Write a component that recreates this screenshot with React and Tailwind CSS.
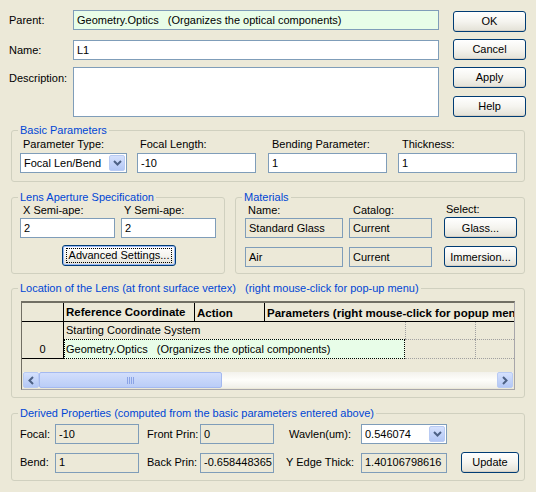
import React from 'react';

const Chevron = () => (
  <svg width="9" height="6" viewBox="0 0 9 6">
    <path d="M1 1l3.5 3.5L8 1" stroke="#4D6185" strokeWidth="2" fill="none" />
  </svg>
);

const Group = ({ title, className = '', children }) => (
  <fieldset className={`border border-[#D0D0BF] rounded-[3px] ${className}`}>
    <legend className="ml-[6px] px-[2px] leading-[12px] text-[#0046D5] whitespace-pre">{title}</legend>
    {children}
  </fieldset>
);

const Field = ({ value, className = '', bg = 'bg-white' }) => (
  <div className={`h-[20px] border border-[#7F9DB9] px-[3px] flex items-center whitespace-pre overflow-hidden ${bg} ${className}`}>
    {value}
  </div>
);

const Btn = ({ children, className = '', focus = false }) => (
  <button
    className={`h-[21px] border border-[#003C74] rounded-[3px] bg-linear-to-b from-white via-[#F5F4EF] to-[#E3E1D6] flex items-center justify-center shadow-[inset_0_-1px_0_#D6D0C5] ${className}`}
  >
    {focus ? <span className="border border-dotted border-black px-[2px] leading-[13px]">{children}</span> : children}
  </button>
);

const Combo = ({ value, className = '' }) => (
  <div className={`h-[20px] border border-[#7F9DB9] bg-white flex items-center pl-[3px] pr-[1px] ${className}`}>
    <span className="flex-1 whitespace-nowrap overflow-hidden">{value}</span>
    <div className="w-[16px] h-[16px] rounded-[2px] border border-[#B9CBF3] bg-linear-to-b from-[#D5E1FD] to-[#B3C7F5] flex items-center justify-center">
      <Chevron />
    </div>
  </div>
);

export default function App() {
  return (
    <div className="w-[536px] h-[492px] bg-[#ECE9D8] overflow-hidden text-[11px] text-black font-['Liberation_Sans',Arial,sans-serif]">
      {/* top section */}
      <div className="flex pt-[10px] pl-[9px]">
        <div className="w-[430px] flex flex-col">
          <div className="flex items-center">
            <span className="w-[64px]">Parent:</span>
            <Field value="Geometry.Optics   (Organizes the optical components)" bg="bg-[#E8FDE8]" className="w-[366px]" />
          </div>
          <div className="flex items-center mt-[10px]">
            <span className="w-[64px]">Name:</span>
            <Field value="L1" className="w-[366px]" />
          </div>
          <div className="flex items-start mt-[7px]">
            <span className="w-[64px] pt-[3px]">Description:</span>
            <div className="w-[366px] h-[50px] border border-[#7F9DB9] bg-white" />
          </div>
        </div>
        <div className="ml-[14px] pt-[1px] flex flex-col gap-[7px]">
          <Btn className="w-[73px]">OK</Btn>
          <Btn className="w-[73px]">Cancel</Btn>
          <Btn className="w-[73px]">Apply</Btn>
          <Btn className="w-[73px] mt-[1px]">Help</Btn>
        </div>
      </div>

      {/* basic parameters */}
      <Group title="Basic Parameters" className="mx-[11px] mt-[7px]">
        <div className="flex pl-[8px] pt-[2px] pb-[8px] leading-[12px]">
          <div className="w-[107px] flex flex-col">
            <span className="pl-[3px]">Parameter Type:</span>
            <Combo value="Focal Len/Bend" className="mt-[3px]" />
          </div>
          <div className="w-[119px] ml-[10px] flex flex-col">
            <span className="pl-[3px]">Focal Length:</span>
            <Field value="-10" className="mt-[3px]" />
          </div>
          <div className="w-[119px] ml-[12px] flex flex-col">
            <span className="pl-[4px]">Bending Parameter:</span>
            <Field value="1" className="mt-[3px]" />
          </div>
          <div className="w-[119px] ml-[11px] flex flex-col">
            <span className="pl-[4px]">Thickness:</span>
            <Field value="1" className="mt-[3px]" />
          </div>
        </div>
      </Group>

      {/* aperture + materials */}
      <div className="flex mx-[11px] mt-[9px] gap-[10px]">
        <Group title="Lens Aperture Specification" className="w-[214px]">
          <div className="pl-[8px] pt-[1px] pb-[6px] leading-[12px]">
            <div className="flex gap-[6px]">
              <div className="w-[95px] flex flex-col">
                <span className="pl-[3px]">X Semi-ape:</span>
                <Field value="2" className="mt-[2px]" />
              </div>
              <div className="w-[95px] flex flex-col">
                <span className="pl-[3px]">Y Semi-ape:</span>
                <Field value="2" className="mt-[2px]" />
              </div>
            </div>
            <Btn focus className="w-[114px] ml-[42px] mt-[7px] border-[#001F6E] shadow-[inset_0_0_0_1px_#98B8F8]">
              Advanced Settings...
            </Btn>
          </div>
        </Group>
        <Group title="Materials" className="flex-1">
          <div className="pl-[9px] pt-[1px] pb-[6px] leading-[12px]">
            <div className="flex">
              <span className="w-[104px] pl-[3px]">Name:</span>
              <span className="w-[94px] pl-[4px]">Catalog:</span>
              <span className="pl-[3px] -mt-[1px]">Select:</span>
            </div>
            <div className="flex items-center mt-[2px]">
              <Field value="Standard Glass" bg="bg-[#ECE9D8]" className="w-[98px]" />
              <Field value="Current" bg="bg-[#ECE9D8]" className="w-[83px] ml-[6px]" />
              <Btn className="w-[73px] ml-[12px] -mt-[1px]">Glass...</Btn>
            </div>
            <div className="flex items-center mt-[8px]">
              <Field value="Air" bg="bg-[#ECE9D8]" className="w-[98px]" />
              <Field value="Current" bg="bg-[#ECE9D8]" className="w-[83px] ml-[6px]" />
              <Btn className="w-[73px] ml-[12px]">Immersion...</Btn>
            </div>
          </div>
        </Group>
      </div>

      {/* location table */}
      <Group
        title="Location of the Lens (at front surface vertex)   (right mouse-click for pop-up menu)"
        className="mx-[11px] mt-[8px]"
      >
        <div className="pl-[9px] pt-[7px] pb-[7px]">
          <div className="w-[494px] h-[89px] border border-[#A7A6AA] border-t-2 border-t-[#716F64] border-l-[#716F64] flex flex-col">
            <div className="flex h-[19px] border-b border-black font-bold text-[11.5px] shrink-0">
              <div className="w-[42px] border-r border-black" />
              <div className="w-[131px] h-[18px] border-r border-black px-[2px] pt-[2px] leading-[14px] overflow-hidden">
                Reference Coordinate System
              </div>
              <div className="w-[70px] border-r border-black px-[2px] pt-[3px] leading-[14px]">Action</div>
              <div className="flex-1 px-[2px] pt-[3px] leading-[14px] whitespace-nowrap overflow-hidden">
                Parameters (right mouse-click for popup menu)
              </div>
            </div>
            <div className="flex shrink-0">
              <div className="w-[42px] h-[37px] border-r border-b border-black flex items-end justify-center pb-[1px]">0</div>
              <div className="flex-1 flex flex-col">
                <div className="flex h-[17px]">
                  <div className="w-[341px] px-[2px] flex items-center whitespace-nowrap">Starting Coordinate System</div>
                  <div className="w-[70px] border-l border-dotted border-[#A0A0A0]" />
                  <div className="flex-1 border-l border-dotted border-[#A0A0A0]" />
                </div>
                <div className="flex h-[20px]">
                  <div className="w-[341px] px-[1px] bg-[#E8FDE8] border border-dotted border-black flex items-center whitespace-pre">
                    Geometry.Optics   (Organizes the optical components)
                  </div>
                  <div className="w-[70px] border-t border-b border-dotted border-[#A0A0A0]" />
                  <div className="flex-1 border-l border-t border-b border-dotted border-[#A0A0A0]" />
                </div>
              </div>
            </div>
            <div className="flex-1" />
            <div className="h-[16px] flex mx-[1px] mb-[1px] bg-linear-to-b from-[#F3F2EC] via-[#FEFEFB] to-[#F0EFE8]">
              <div className="w-[16px] rounded-[2px] border border-[#B9CBF3] bg-linear-to-b from-[#D5E1FD] to-[#B3C7F5] flex items-center justify-center">
                <svg width="6" height="9" viewBox="0 0 6 9">
                  <path d="M5 1L1.5 4.5 5 8" stroke="#4D6185" strokeWidth="2" fill="none" />
                </svg>
              </div>
              <div className="w-[183px] rounded-[2px] border border-[#A4B9F0] bg-linear-to-b from-[#D2DEFC] to-[#BACDF7] flex items-center justify-center gap-[1px]">
                <span className="w-[1px] h-[7px] bg-[#8AA3E6]" />
                <span className="w-[1px] h-[7px] bg-[#8AA3E6]" />
                <span className="w-[1px] h-[7px] bg-[#8AA3E6]" />
                <span className="w-[1px] h-[7px] bg-[#8AA3E6]" />
              </div>
              <div className="flex-1" />
              <div className="w-[16px] rounded-[2px] border border-[#B9CBF3] bg-linear-to-b from-[#D5E1FD] to-[#B3C7F5] flex items-center justify-center">
                <svg width="6" height="9" viewBox="0 0 6 9">
                  <path d="M1 1l3.5 3.5L1 8" stroke="#4D6185" strokeWidth="2" fill="none" />
                </svg>
              </div>
            </div>
          </div>
        </div>
      </Group>

      {/* derived properties */}
      <Group
        title="Derived Properties (computed from the basic parameters entered above)"
        className="mx-[11px] mt-[9px]"
      >
        <div className="pl-[8px] pt-[5px] pb-[7px]">
          <div className="flex items-center">
            <span className="w-[35px]">Focal:</span>
            <Field value="-10" bg="bg-[#ECE9D8]" className="w-[84px]" />
            <span className="w-[61px] pl-[8px]">Front Prin:</span>
            <Field value="0" bg="bg-[#ECE9D8]" className="w-[74px]" />
            <span className="w-[87px] pl-[15px]">Wavlen(um):</span>
            <Combo value="0.546074" className="w-[86px]" />
          </div>
          <div className="flex items-center mt-[8px]">
            <span className="w-[35px]">Bend:</span>
            <Field value="1" bg="bg-[#ECE9D8]" className="w-[84px]" />
            <span className="w-[61px] pl-[8px]">Back Prin:</span>
            <Field value="-0.658448365" bg="bg-[#ECE9D8]" className="w-[74px]" />
            <span className="w-[87px] pl-[12px]">Y Edge Thick:</span>
            <Field value="1.40106798616" bg="bg-[#ECE9D8]" className="w-[86px]" />
            <Btn className="w-[58px] ml-[14px]">Update</Btn>
          </div>
        </div>
      </Group>
    </div>
  );
}
